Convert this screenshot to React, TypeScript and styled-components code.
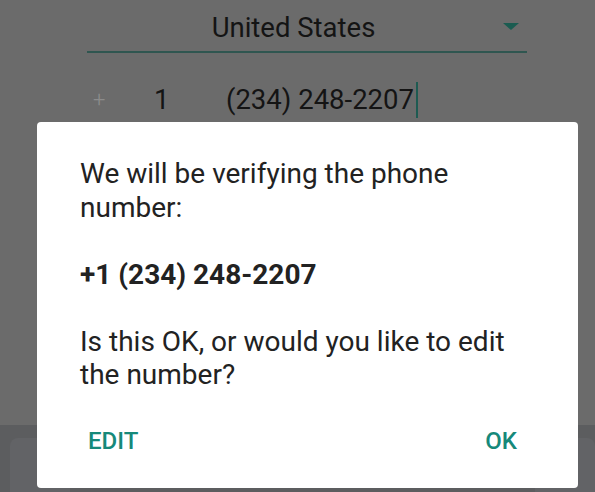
import React from "react";
import styled, { createGlobalStyle } from "styled-components";

const Global = createGlobalStyle`
  html, body { margin: 0; padding: 0; }
  body { font-family: Roboto, "Noto Sans", sans-serif; }
`;

const Screen = styled.div`
  position: relative;
  width: 595px;
  height: 492px;
  overflow: hidden;
  background: #6b6b6b;
  display: flex;
  flex-direction: column;
`;

const Form = styled.div`
  flex: 1;
  display: flex;
  flex-direction: column;
  padding: 11px 0 0 87px;
`;

const CountrySelect = styled.div`
  width: 440px;
  height: 42px;
  box-sizing: border-box;
  border-bottom: 2px solid #2f5650;
  display: flex;
  align-items: flex-start;
  justify-content: center;
  padding-right: 27px;
  position: relative;
  font-size: 27.5px;
  line-height: 33px;
  color: #141414;
`;

const Caret = styled.svg`
  position: absolute;
  right: 8px;
  top: 12px;
`;

const PhoneRow = styled.div`
  margin-top: 29px;
  padding-left: 6px;
  display: flex;
  align-items: center;
  font-size: 27.5px;
  line-height: 36px;
  height: 36px;
  color: #141414;
`;

const Plus = styled.span`
  color: #8c8c8c;
  width: 61px;
  font-size: 22px;
  font-weight: 300;
`;

const Code = styled.span`
  width: 72px;
`;

const Cursor = styled.span`
  display: inline-block;
  width: 2px;
  height: 36px;
  background: #1e5b52;
  margin-left: 2px;
`;

const Keyboard = styled.div`
  height: 67px;
  background: #5c5d5f;
  padding: 13px 0 0 10px;
  box-sizing: border-box;
  display: flex;
  justify-content: space-between;
`;

const Key = styled.div`
  width: 60px;
  height: 70px;
  border-radius: 8px;
  background: #626366;
`;

const Dialog = styled.div`
  position: absolute;
  left: 37px;
  top: 122px;
  width: 541px;
  height: 366px;
  background: #ffffff;
  border-radius: 4px;
  box-sizing: border-box;
  padding: 35px 48px 0 43px;
  display: flex;
  flex-direction: column;
  color: #222222;
  font-size: 28px;
  line-height: 33.5px;
`;

const Para = styled.p<{ $bold?: boolean }>`
  margin: 0 0 33.5px 0;
  font-weight: ${(p) => (p.$bold ? 700 : 400)};
`;

const Actions = styled.div`
  margin-top: auto;
  margin-bottom: 33px;
  display: flex;
  justify-content: space-between;
  padding: 0 13px 0 8px;
  line-height: 28px;
`;

const ActionButton = styled.span`
  color: #16897a;
  font-weight: 500;
  font-size: 24px;
`;

export default function App() {
  return (
    <>
      <Global />
      <Screen>
        <Form>
          <CountrySelect>
            United States
            <Caret width="16" height="7" viewBox="0 0 16 7">
              <path d="M0 0 H16 L8 7 Z" fill="#1b5c51" />
            </Caret>
          </CountrySelect>
          <PhoneRow>
            <Plus>+</Plus>
            <Code>1</Code>
            <span>(234) 248-2207</span>
            <Cursor />
          </PhoneRow>
        </Form>
        <Keyboard>
          <Key />
          <Key />
        </Keyboard>
        <Dialog>
          <Para>We will be verifying the phone number:</Para>
          <Para $bold>+1 (234) 248-2207</Para>
          <Para>Is this OK, or would you like to edit the number?</Para>
          <Actions>
            <ActionButton>EDIT</ActionButton>
            <ActionButton>OK</ActionButton>
          </Actions>
        </Dialog>
      </Screen>
    </>
  );
}
